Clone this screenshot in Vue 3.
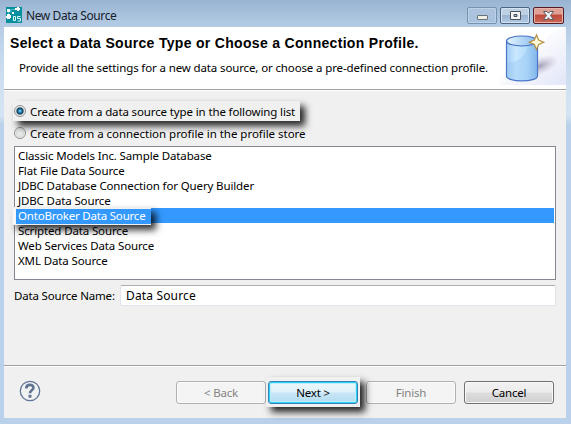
<script setup>
import { ref } from 'vue'

const sources = [
  { name: 'Classic Models Inc. Sample Database', cls: 'classic' },
  { name: 'Flat File Data Source', cls: 'flat' },
  { name: 'JDBC Database Connection for Query Builder', cls: 'query' },
  { name: 'JDBC Data Source', cls: 'jdbc' },
  { name: 'OntoBroker Data Source', cls: 'onto' },
  { name: 'Scripted Data Source', cls: 'scripted' },
  { name: 'Web Services Data Source', cls: 'web' },
  { name: 'XML Data Source', cls: 'xml' }
]
const selected = ref(4)
const mode = ref('type')
const sourceName = ref('Data Source')
</script>

<template>
  <div class="window">
    <header class="titlebar">
      <svg class="app-icon" width="16" height="16" viewBox="0 0 16 16">
        <rect width="16" height="16" fill="#078f9d" />
        <path d="M2 10 3 3 11 2M3 3l4 3" fill="none" stroke="#49c3cc" />
        <path d="M0 9h1V7h3v1h1v3H4v1H1v-1H0zM1 2h3v3H1zM9 1h2V0h2v1h1v2h-1v1h-2V3H9zM6 5h2v2H6z" fill="#fff" />
        <path d="M7.500 9.500h2v4h-2zM14.500 9.500h-3v2h3v2.500h-3" fill="none" stroke="#d9f8fa" />
      </svg>
      <span class="caption">New Data Source</span>
      <div class="controls">
        <button class="control faded" aria-label="Minimize">
          <svg width="28" height="15" viewBox="0 0 28 15"><rect x="9.500" y="7.500" width="10" height="4" rx=".5" fill="#eeeee5" stroke="#69727b" /></svg>
        </button>
        <button class="control" aria-label="Maximize">
          <svg width="28" height="15" viewBox="0 0 28 15"><path d="M9.500 3.500h10v8h-10zM13 6.500v2h3v-2z" fill="#f5f5f5" fill-rule="evenodd" stroke="#4b5260" /></svg>
        </button>
        <button class="control close" aria-label="Close">
          <svg width="29" height="15" viewBox="0 0 29 15"><path d="M9.500 3.500h3.500l1.500 1.700L16 3.500h3.500L16.500 7.500l3 4H16l-1.500-1.700L13 11.500H9.500l3-4z" fill="#f4f4f4" stroke="#565b67" /></svg>
        </button>
      </div>
    </header>

    <main class="client">
      <section class="banner">
        <div class="banner-text">
          <h1>Select a Data Source Type or Choose a Connection Profile.</h1>
          <p>Provide all the settings for a new data source, or choose a pre-defined connection profile.</p>
        </div>
        <svg class="art" width="67" height="58" viewBox="0 0 67 58">
          <defs>
            <linearGradient id="sweep" x1="0" y1="0" x2=".9" y2="1"><stop offset=".45" stop-color="#fff" /><stop offset="1" stop-color="#e4e7f8" /></linearGradient>
            <linearGradient id="side"><stop offset="0" stop-color="#a2cdf5" /><stop offset=".3" stop-color="#cae8ff" /><stop offset=".65" stop-color="#b6dcfb" /><stop offset="1" stop-color="#79aee8" /></linearGradient>
            <linearGradient id="lid"><stop offset="0" stop-color="#e5f5ff" /><stop offset="1" stop-color="#83b9ee" /></linearGradient>
            <linearGradient id="corner" x1="0" y1="0" x2="1" y2="1"><stop offset=".4" stop-color="#fbfbff" /><stop offset="1" stop-color="#e2e6f7" /></linearGradient>
            <radialGradient id="shade"><stop offset="0" stop-color="#8d849f" stop-opacity=".75" /><stop offset="1" stop-color="#b9b4cb" stop-opacity="0" /></radialGradient>
          </defs>
          <rect width="67" height="58" fill="url(#sweep)" />
          <path d="M67 0v58H0Q30 45 39 22 48 5 67 0" fill="url(#corner)" opacity=".65" />
          <ellipse cx="41" cy="39" rx="20" ry="9" fill="url(#shade)" transform="rotate(-22 41 39)" />
          <path d="M7.500 14v35c0 6.500 31 6.500 31 0V14z" fill="url(#side)" stroke="#4b75c8" stroke-width="1.200" />
          <path d="M8.500 49V35Q24 36 29 19l9-3v32c0 6-29 7-29.500 1" fill="#8fc3f2" opacity=".35" />
          <ellipse cx="23" cy="14" rx="15.500" ry="5" fill="url(#lid)" stroke="#4470c4" stroke-width="1.200" />
          <path d="m37.500 8 2.200 5 5 2.200-5 2.200-2.200 5-2.200-5-5-2.200 5-2.200z" fill="#fff8d9" stroke="#b28e43" stroke-width="1.200" />
        </svg>
      </section>

      <section class="content">
        <label class="choice spotlight first" @click="mode = 'type'">
          <span class="radio" :class="{ on: mode === 'type' }"></span>
          <span class="label-type">Create from a data source type in the following list</span>
        </label>
        <label class="choice" @click="mode = 'profile'">
          <span class="radio" :class="{ on: mode === 'profile' }"></span>
          <span class="label-profile">Create from a connection profile in the profile store</span>
        </label>
        <ul class="list">
          <li v-for="(s, i) in sources" :key="s.name" :class="{ selected: i === selected }" @click="selected = i">
            <span class="item" :class="s.cls">{{ s.name }}</span>
          </li>
        </ul>
        <div class="field">
          <label for="source-name">Data Source Name:</label>
          <input id="source-name" v-model="sourceName" spellcheck="false" />
        </div>
      </section>

      <footer class="footer">
        <svg class="help" width="22" height="22" viewBox="0 0 22 22">
          <circle cx="11" cy="11" r="9.700" fill="#f1f2f4" stroke="#617596" stroke-width="1.300" />
          <path d="M7.300 8.500C7.300 3.600 14.700 4 14.400 7.800c-.2 2.600-3.400 2.500-3.400 5.400" fill="none" stroke="#627491" stroke-width="2.700" />
          <rect x="9.500" y="14.700" width="3" height="3" rx=".7" fill="#627491" />
        </svg>
        <div class="buttons">
          <button class="btn" disabled>&lt; Back</button>
          <span class="next-frame"><button class="btn primary">Next &gt;</button></span>
          <button class="btn finish" disabled>Finish</button>
          <button class="btn cancel">Cancel</button>
        </div>
      </footer>
    </main>
  </div>
</template>

<style>
body {
  overflow: hidden;
}
</style>

<style scoped>
* {
  box-sizing: border-box;
}
.window {
  width: 571px;
  height: 424px;
  padding: 0 5px 6px 4px;
  background: linear-gradient(#99b4d1 0, #b5cce5 27px, #c5d9ed 55px, #d3e3f3 100px, #d5e4f3 115px, #b9d1ea 125px);
  font: 11.5px/15px "Noto Sans", "Open Sans", sans-serif;
  letter-spacing: -0.13px;
  color: #000;
  white-space: nowrap;
}
.titlebar {
  height: 27px;
  display: flex;
  align-items: flex-start;
  padding: 7px 2px 0;
}
.app-icon {
  flex: none;
}
.caption {
  margin: 1px 0 0 4px;
  color: #16202c;
  font-size: 12px;
  letter-spacing: -0.4px;
}
.controls {
  margin-left: auto;
  display: flex;
  gap: 3px;
}
.control {
  width: 30px;
  height: 17px;
  padding: 0;
  display: flex;
  border: 1px solid #4c6482;
  border-radius: 2px;
  background: linear-gradient(#bdd0e4 0 45%, #9cb4d0 50%, #b2cbe5);
  box-shadow: inset 0 0 0 1px #d4e2f0;
}
.control.faded {
  border-color: #7891af;
  background: linear-gradient(#adc4de, #a8c2df);
  box-shadow: inset 0 0 0 1px #bed2e7;
}
.control.close {
  width: 31px;
  border-color: #541c23;
  background: linear-gradient(#dfa196 0 40%, #c0493b 48%, #c96956);
  box-shadow: inset 0 0 0 1px #e5b3a9;
}
.client {
  width: 562px;
  height: 391px;
  display: flex;
  flex-direction: column;
  background: #f0f0f0;
}
.banner {
  height: 64px;
  flex: none;
  display: flex;
  background: #fff;
  border-bottom: 1px solid #fff;
  box-shadow: inset 0 -1px #a0a0a0;
}
.banner-text {
  width: 495px;
  flex: none;
  padding-left: 6px;
}
.art {
  flex: none;
}
h1 {
  margin: 9px 0 0;
  font: bold 14px/15px "Liberation Sans", Arial, sans-serif;
  letter-spacing: 0.31px;
}
p {
  margin: 9px 0 0 9px;
}
.content {
  padding: 10px 10px 0 9px;
}
.choice {
  height: 20px;
  margin-top: 2px;
  padding-left: 1px;
  display: flex;
  align-items: center;
  gap: 4px;
}
.choice.first {
  width: 287px;
  margin-top: 0;
}
.label-profile {
  letter-spacing: -0.03px;
}
.spotlight {
  background: #f0f0f0;
  position: relative;
  box-shadow: 5px 5px 7px rgba(0, 0, 0, 0.85);
}
.radio {
  width: 12px;
  height: 12px;
  flex: none;
  border: 1px solid #8e8f8f;
  border-radius: 50%;
  background: radial-gradient(#e8e8e8 2px, #d6d8da 4px, #fafafa 5px);
}
.radio.on {
  background: radial-gradient(circle at 5px 5px, #a5e3f8 0, #248cc0 1.5px, #103751 3px, #c5cdd2 4px, #fafafa 5px);
}
.list {
  width: 542px;
  height: 134px;
  margin: 3px 0 0 1px;
  padding: 1px;
  list-style: none;
  background: #fff;
  border: 1px solid #828790;
}
li {
  height: 15px;
  padding-left: 2px;
}
li.selected {
  display: flex;
  align-items: center;
  padding: 0;
  background: #39f;
  color: #fff;
}
li.selected .item {
  position: relative;
  width: 139px;
  height: 18px;
  flex: none;
  margin-left: -4px;
  padding-left: 5px;
  line-height: 14px;
  letter-spacing: -0.2px;
  border: solid #f0f0f0;
  border-width: 2px 0 1px 1px;
  background: linear-gradient(90deg, #f7f7f7 3px, #39f 3px);
  box-shadow: 5px 5px 7px rgba(0, 0, 0, 0.8);
}
.field {
  margin: 5px 0 0 1px;
  display: flex;
  align-items: center;
}
.field label {
  width: 106px;
  letter-spacing: -0.18px;
}
input {
  width: 436px;
  height: 21px;
  padding: 0 5px;
  font: inherit;
  font-size: 12px;
  letter-spacing: 0.15px;
  border: 1px solid #e2e3ea;
  border-top-color: #abadb3;
  border-radius: 2px;
  background: #fff;
  outline: 0;
}
.footer {
  height: 53px;
  margin-top: auto;
  padding: 0 12px 0 15px;
  display: flex;
  align-items: flex-start;
  justify-content: space-between;
  border-top: 1px solid #a0a0a0;
  box-shadow: inset 0 1px #fff;
}
.help {
  margin-top: 14px;
}
.buttons {
  display: flex;
  align-items: center;
  margin-top: 11px;
}
.btn {
  width: 90px;
  height: 23px;
  padding: 0;
  font: inherit;
  letter-spacing: -0.2px;
  border: 1px solid #707070;
  border-radius: 3px;
  background: linear-gradient(#f2f2f2, #ebebeb 48%, #dddddd 52%, #cfcfcf);
  box-shadow: inset 0 0 0 1px #fafafa;
  color: #000;
}
.btn:disabled {
  background: #f4f4f4;
  border-color: #adb2b5;
  color: #838383;
}
.next-frame {
  position: relative;
  height: 30px;
  padding: 4px 2px 3px;
  background: #f0f0f0;
  box-shadow: 5px 5px 7px rgba(0, 0, 0, 0.85);
}
.btn.primary {
  display: block;
  border-color: #3c7fb1;
  background: linear-gradient(#edf7fc, #dff1fa 48%, #c8e6f6 52%, #b4dcf1);
  box-shadow: inset 0 0 0 1px #2bd0fb, inset 0 0 0 2px #b9eefc;
}
.finish {
  margin-left: 6px;
}
.cancel {
  margin-left: 8px;
}
</style>
